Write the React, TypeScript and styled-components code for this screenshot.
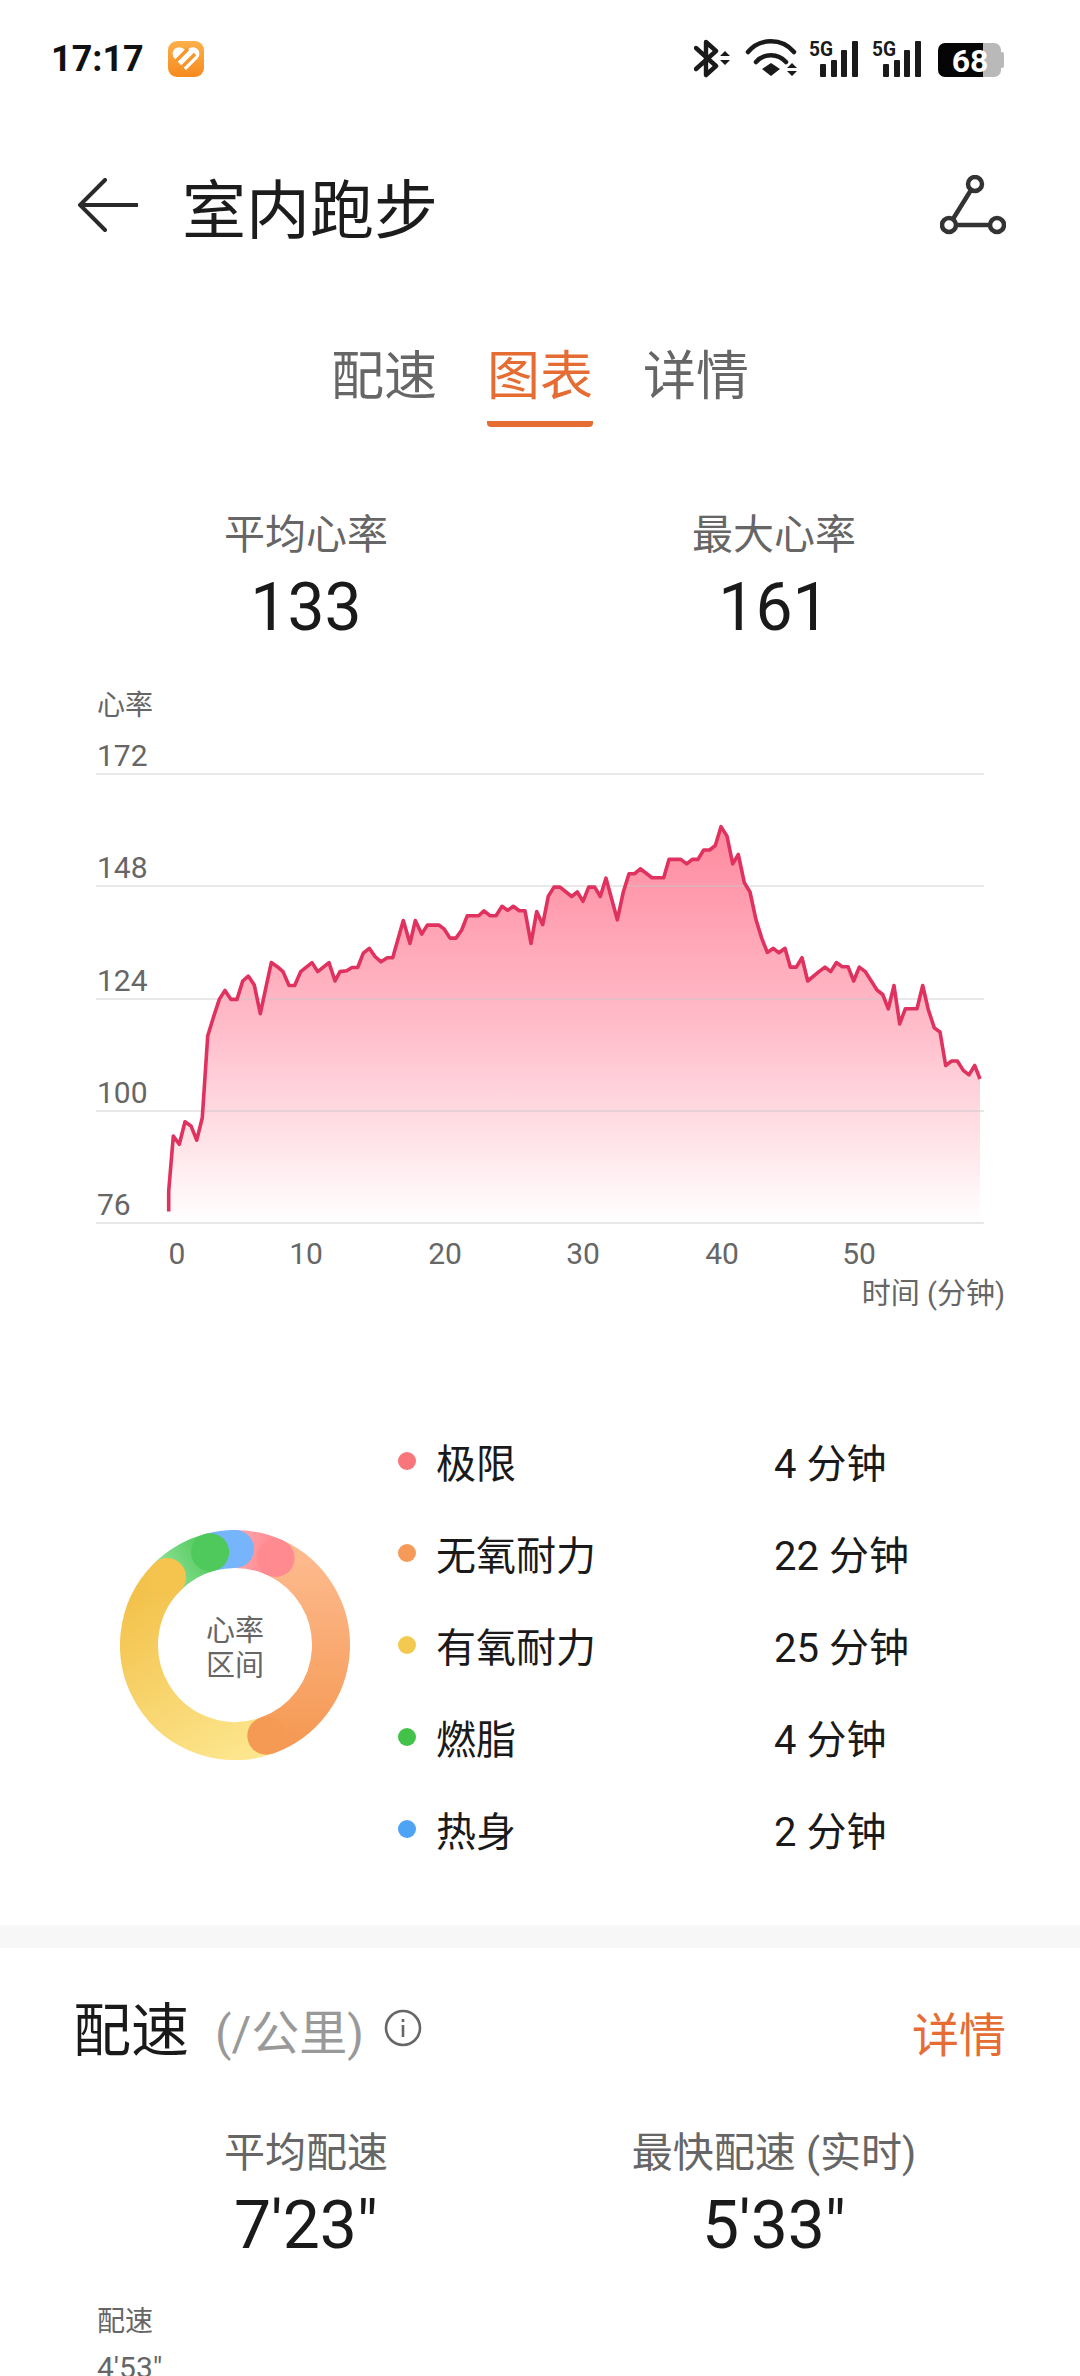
import React from "react";
import styled, { createGlobalStyle } from "styled-components";

const ORANGE = "#e56d33";
const FONT = `Roboto, "Noto Sans CJK SC", sans-serif`;

const GlobalStyle = createGlobalStyle`
  html, body { margin: 0; padding: 0; background: #fff; }
  body { font-family: ${FONT}; color: #1a1a1a; }
`;

const Page = styled.div`
  width: 1080px;
  height: 2376px;
  overflow: hidden;
  background: #fff;
`;

const StatusBar = styled.div`
  height: 116px;
  box-sizing: border-box;
  padding: 2px 74px 0 51px;
  display: flex;
  align-items: center;
  justify-content: space-between;
`;

const StatusLeft = styled.div`
  display: flex;
  align-items: center;
  gap: 24px;
`;

const Clock = styled.span`
  font-size: 36px;
  font-weight: 700;
  color: #111;
  line-height: 1;
`;

const Header = styled.header`
  height: 178px;
  padding: 0 74px 0 78px;
  display: flex;
  align-items: center;
  gap: 44px;
`;

const Title = styled.h1`
  flex: 1;
  margin: 0;
  font-size: 64px;
  font-weight: 400;
  color: #1c1c1c;
`;

const Tabs = styled.nav`
  display: flex;
  justify-content: center;
  gap: 50px;
  padding-top: 47px;
  height: 89px;
`;

const Tab = styled.div<{ $active?: boolean }>`
  font-size: 53px;
  line-height: 72px;
  color: ${(p) => (p.$active ? ORANGE : "#666")};
  height: 86px;
  box-sizing: border-box;
  border-bottom: 6px solid ${(p) => (p.$active ? ORANGE : "transparent")};
  border-radius: 0 0 4px 4px;
`;

const StatsGrid = styled.div<{ $top: number }>`
  display: grid;
  grid-template-columns: 468px 468px;
  padding: ${(p) => p.$top}px 72px 0;
  text-align: center;
`;

const StatLabel = styled.div`
  font-size: 41px;
  line-height: 56px;
  color: #666;
`;

const StatValue = styled.div`
  font-size: 66px;
  line-height: 76px;
  margin-top: 7px;
  color: #1a1a1a;
`;

const ChartSvg = styled.svg`
  display: block;
  margin-top: 35px;
`;

const Zones = styled.section`
  height: 460px;
  margin: 94px 0 50px;
  padding-left: 120px;
  display: flex;
  align-items: center;
  gap: 48px;
`;

const Legend = styled.div`
  display: flex;
  flex-direction: column;
`;

const LegendRow = styled.div`
  height: 92px;
  display: grid;
  grid-template-columns: 18px 336px auto;
  column-gap: 20px;
  align-items: center;
  font-size: 40px;
  color: #1a1a1a;
  & > span:last-child { margin-left: -18px; }
`;

const Dot = styled.i<{ $color: string }>`
  width: 18px;
  height: 18px;
  border-radius: 50%;
  background: ${(p) => p.$color};
`;

const Band = styled.div`
  height: 23px;
  background: #f7f7f7;
`;

const SectionHead = styled.div`
  height: 143px;
  box-sizing: border-box;
  padding: 12px 74px 0 73px;
  display: flex;
  align-items: center;
`;

const SectionTitle = styled.h2`
  margin: 0 26px 0 0;
  font-size: 58px;
  font-weight: 400;
  color: #1a1a1a;
`;

const Unit = styled.span`
  font-size: 48px;
  color: #999;
  margin: 6px 20px 0 0;
`;

const InfoIcon = styled.svg`
  flex: none;
  margin-top: 4px;
`;

const DetailLink = styled.a`
  margin-left: auto;
  margin-top: 12px;
  font-size: 47px;
  color: ${ORANGE};
`;

const AxisTitle = styled.div`
  margin: 38px 0 0 97px;
  font-size: 28px;
  line-height: 40px;
  color: #666;
`;

const AxisTick = styled.div`
  margin: 6px 0 0 97px;
  font-size: 30px;
  line-height: 40px;
  color: #666;
`;

// traced off the reference, in px from the chart's top-left corner
const HEART_POINTS: [number, number][] = [
  [326,1300],[326,1250],[340,1115],[358,1135],[375,1080],[393,1090],[410,1125],[427,1070],[443,870],[460,825],
  [478,780],[495,758],[513,780],[531,780],[548,735],[565,723],[583,745],[601,815],[618,750],[634,690],
  [652,700],[669,712],[687,746],[704,746],[722,712],[756,690],[773,712],[807,690],[825,735],[840,712],
  [860,710],[876,702],[893,702],[910,667],[928,655],[945,675],[963,688],[982,678],[998,678],[1030,587],
  [1050,643],[1066,587],[1085,620],[1102,598],[1137,598],[1153,608],[1170,630],[1188,630],[1205,610],[1222,575],
  [1256,575],[1272,563],[1290,575],[1308,575],[1326,552],[1343,562],[1360,552],[1378,563],
  ...([
    [15,563],[33,643],[50,565],[68,597],[85,527],[102,505],[120,505],[155,528],[172,517],[189,540],
    [206,505],[224,505],[241,528],[258,483],[292,585],[310,517],[327,472],[344,472],[361,460],[396,482],
    [431,482],[447,437],[482,437],[500,448],[517,437],[534,437],[551,414],[569,414],[586,403],[603,357],
    [621,380],[638,448],[655,425],[673,494],[690,517],[708,585],[725,630],[742,665],[760,655],[777,666],
    [795,655],[811,701],[829,701],[846,678],[863,735],[897,712],[915,701],[932,712],[949,690],[967,700],
    [984,700],[1001,735],[1018,701],[1036,712],[1071,757],[1088,768],[1105,803],[1122,746],[1139,840],[1156,803],
    [1191,803],[1208,746],[1225,805],[1243,850],[1260,860],[1277,942],[1295,931],[1312,931],[1330,954],[1347,965],
    [1364,942],[1380,975],
  ] as [number, number][]).map(([x, y]) => [x + 1380, y] as [number, number]),
];

const linePoints = HEART_POINTS.map(([x, y]) => `${(60 + x / 3).toFixed(1)},${(680 + y / 2.45).toFixed(1)}`);

const GRID_LINES = [
  { y: 773, label: "172", base: 765 },
  { y: 885, label: "148", base: 877 },
  { y: 998, label: "124", base: 990 },
  { y: 1110, label: "100", base: 1102 },
  { y: 1222, label: "76", base: 1214 },
];

const X_TICKS = [
  { x: 177, label: "0" },
  { x: 306, label: "10" },
  { x: 445, label: "20" },
  { x: 583, label: "30" },
  { x: 722, label: "40" },
  { x: 859, label: "50" },
];

const HeartChart = () => (
  <ChartSvg width={1080} height={640} viewBox="0 680 1080 640" fontFamily={FONT}>
    <defs>
      <linearGradient id="heartFill" gradientUnits="userSpaceOnUse" x1="0" y1="825" x2="0" y2="1222">
        <stop offset="0" stopColor="#ff8a9f" />
        <stop offset="0.5" stopColor="#ffbcc9" />
        <stop offset="1" stopColor="#ffffff" />
      </linearGradient>
    </defs>
    <text x="97" y="714" fontSize="28" fill="#666">心率</text>
    <polygon
      points={`169,1222 ${linePoints.join(" ")} 980,1222`}
      fill="url(#heartFill)"
    />
    {GRID_LINES.map((g) => (
      <g key={g.label}>
        <line x1="96" x2="984" y1={g.y} y2={g.y} stroke="#c9c9c9" strokeOpacity="0.55" strokeWidth="1.5" />
        <text x="97" y={g.base} fontSize="30" fill="#666">{g.label}</text>
      </g>
    ))}
    <polyline points={linePoints.join(" ")} fill="none" stroke="#e0325f" strokeWidth="3.6" strokeLinejoin="round" />
    {X_TICKS.map((t) => (
      <text key={t.label} x={t.x} y="1263" fontSize="30" fill="#666" textAnchor="middle">{t.label}</text>
    ))}
    <text x="1005" y="1303" fontSize="29" fill="#666" textAnchor="end">时间 (分钟)</text>
  </ChartSvg>
);

const polar = (deg: number, r = 96) => {
  const a = (deg * Math.PI) / 180;
  return [115 + r * Math.sin(a), 115 - r * Math.cos(a)];
};

const RING = [
  { id: "ringBlue", from: 345, to: 360, start: "#76b5fb", end: "#76b5fb", cap: "#76b5fb" },
  { id: "ringGreen", from: 315, to: 345, start: "#8ce094", end: "#4fc95b", cap: "#4fc95b" },
  { id: "ringYellow", from: 161, to: 315, start: "#fce58c", end: "#f3c24c", cap: "#f4c44e" },
  { id: "ringOrange", from: 25, to: 161, start: "#fdb98c", end: "#f59a55", cap: "#f59a55" },
  { id: "ringRed", from: 0, to: 25, start: "#ffa5ab", end: "#ff878e", cap: "#ff8a90" },
];

const ZoneRing = () => (
  <svg width={230} height={230} viewBox="0 0 230 230" fontFamily={FONT}>
    <defs>
      {RING.map((s) => {
        const [x1, y1] = polar(s.from);
        const [x2, y2] = polar(s.to);
        return (
          <linearGradient key={s.id} id={s.id} gradientUnits="userSpaceOnUse" x1={x1} y1={y1} x2={x2} y2={y2}>
            <stop offset="0" stopColor={s.start} />
            <stop offset="1" stopColor={s.end} />
          </linearGradient>
        );
      })}
    </defs>
    {RING.map((s) => {
      const [x1, y1] = polar(s.from);
      const [x2, y2] = polar(s.to);
      const large = s.to - s.from > 180 ? 1 : 0;
      return (
        <path
          key={s.id}
          d={`M${x1} ${y1}A96 96 0 ${large} 1 ${x2} ${y2}`}
          fill="none"
          stroke={`url(#${s.id})`}
          strokeWidth="38"
        />
      );
    })}
    {/* each band ends in a round head lying over the next band */}
    {RING.map((s) => {
      const [x, y] = polar(s.to);
      return <circle key={s.id} cx={x} cy={y} r="19" fill={s.cap} />;
    })}
    <text x="115" y="111" fontSize="29" fill="#666" textAnchor="middle">心率</text>
    <text x="115" y="146" fontSize="29" fill="#666" textAnchor="middle">区间</text>
  </svg>
);

const ZONES = [
  { name: "极限", time: "4 分钟", color: "#f8757c" },
  { name: "无氧耐力", time: "22 分钟", color: "#f69a5a" },
  { name: "有氧耐力", time: "25 分钟", color: "#f3c94f" },
  { name: "燃脂", time: "4 分钟", color: "#43c24a" },
  { name: "热身", time: "2 分钟", color: "#4fa3f5" },
];

const AppBadge = () => (
  <svg width={36} height={36} viewBox="0 0 36 36">
    <defs>
      <linearGradient id="badge" x1="0" y1="0" x2="0" y2="1">
        <stop offset="0" stopColor="#fdb04a" />
        <stop offset="1" stopColor="#f68a1e" />
      </linearGradient>
    </defs>
    <rect width="36" height="36" rx="9" fill="url(#badge)" />
    <path d="M18 29 6.5 17.5a6.6 6.6 0 0 1 9.4-9.4l2.1 2.1 2.1-2.1a6.6 6.6 0 0 1 9.4 9.4z" fill="#fff" />
    <path d="M8 20 20 8M14 26 27 13" stroke="#f8962c" strokeWidth="3.4" />
  </svg>
);

const StatusIcons = () => (
  <svg width={312} height={46} viewBox="694 36 312 46" fontFamily="Roboto, sans-serif">
    {/* bluetooth */}
    <path
      d="M696 48 L716 66 L706 75 V42 L716 51 L696 69"
      fill="none"
      stroke="#1a1a1a"
      strokeWidth="4.4"
      strokeLinejoin="round"
      strokeLinecap="round"
    />
    <path d="M720 56l5-5 5 5zM720 60l5 5 5-5z" fill="#1a1a1a" />
    {/* wifi */}
    <path d="M748 52A30 30 0 0 1 794 52M756 62A20 20 0 0 1 786 62" fill="none" stroke="#1a1a1a" strokeWidth="4.5" strokeLinecap="round" />
    <path d="M762 69l9-6 9 6-9 7z" fill="#1a1a1a" />
    <path d="M787 68l5-5 5 5zM787 71l5 5 5-5z" fill="#1a1a1a" />
    {/* two sim signal groups */}
    {[810, 873].map((x) => (
      <g key={x} fill="#1a1a1a">
        <text x={x - 1} y="56" fontSize="20" fontWeight="700" textLength="24" lengthAdjust="spacingAndGlyphs">5G</text>
        <rect x={x + 10} y="64" width="6" height="13" rx="1" />
        <rect x={x + 21} y="60" width="6" height="17" rx="1" />
        <rect x={x + 31} y="50" width="6" height="27" rx="1" />
        <rect x={x + 42} y="41" width="6" height="36" rx="1" />
      </g>
    ))}
    {/* battery */}
    <rect x="960" y="43" width="41" height="34" rx="7" fill="#b9b9b9" />
    <rect x="1000" y="52" width="4" height="16" rx="2" fill="#b9b9b9" />
    <path d="M945 43h38v34h-38a7 7 0 0 1-7-7V50a7 7 0 0 1 7-7z" fill="#050505" />
    <text x="970" y="72" fontSize="32" fontWeight="700" fill="#fff" textAnchor="middle">68</text>
  </svg>
);

const BackArrow = () => (
  <svg width={60} height={54} viewBox="0 0 60 54" fill="none" stroke="#2a2a2a" strokeWidth="4" strokeLinecap="round">
    <path d="M27 2 2 27l25 25M3 27h56" />
  </svg>
);

const RouteIcon = () => (
  <svg width={66} height={60} viewBox="0 0 66 60" fill="none" stroke="#333" strokeWidth="4.5">
    <circle cx="35" cy="9" r="7" />
    <circle cx="9" cy="50" r="7" />
    <circle cx="57" cy="50" r="7" />
    <path d="M31 15 13 44M16 50h34" />
  </svg>
);

export default function App() {
  return (
    <Page>
      <GlobalStyle />
      <StatusBar>
        <StatusLeft>
          <Clock>17:17</Clock>
          <AppBadge />
        </StatusLeft>
        <StatusIcons />
      </StatusBar>

      <Header>
        <BackArrow />
        <Title>室内跑步</Title>
        <RouteIcon />
      </Header>

      <Tabs>
        <Tab>配速</Tab>
        <Tab $active>图表</Tab>
        <Tab>详情</Tab>
      </Tabs>

      <StatsGrid $top={77}>
        <div>
          <StatLabel>平均心率</StatLabel>
          <StatValue>133</StatValue>
        </div>
        <div>
          <StatLabel>最大心率</StatLabel>
          <StatValue>161</StatValue>
        </div>
      </StatsGrid>

      <HeartChart />

      <Zones>
        <ZoneRing />
        <Legend>
          {ZONES.map((z) => (
            <LegendRow key={z.name}>
              <Dot $color={z.color} />
              <span>{z.name}</span>
              <span>{z.time}</span>
            </LegendRow>
          ))}
        </Legend>
      </Zones>

      <Band />

      <SectionHead>
        <SectionTitle>配速</SectionTitle>
        <Unit>(/公里)</Unit>
        <InfoIcon viewBox="0 0 38 38" width={38} height={38} fill="none" stroke="#666" strokeWidth="2.6">
          <circle cx="19" cy="19" r="17" />
          <path d="M19 16v12M19 10v3" />
        </InfoIcon>
        <DetailLink>详情</DetailLink>
      </SectionHead>

      <StatsGrid $top={34}>
        <div>
          <StatLabel>平均配速</StatLabel>
          <StatValue>7'23"</StatValue>
        </div>
        <div>
          <StatLabel>最快配速 (实时)</StatLabel>
          <StatValue>5'33"</StatValue>
        </div>
      </StatsGrid>

      <AxisTitle>配速</AxisTitle>
      <AxisTick>4'53"</AxisTick>
    </Page>
  );
}
